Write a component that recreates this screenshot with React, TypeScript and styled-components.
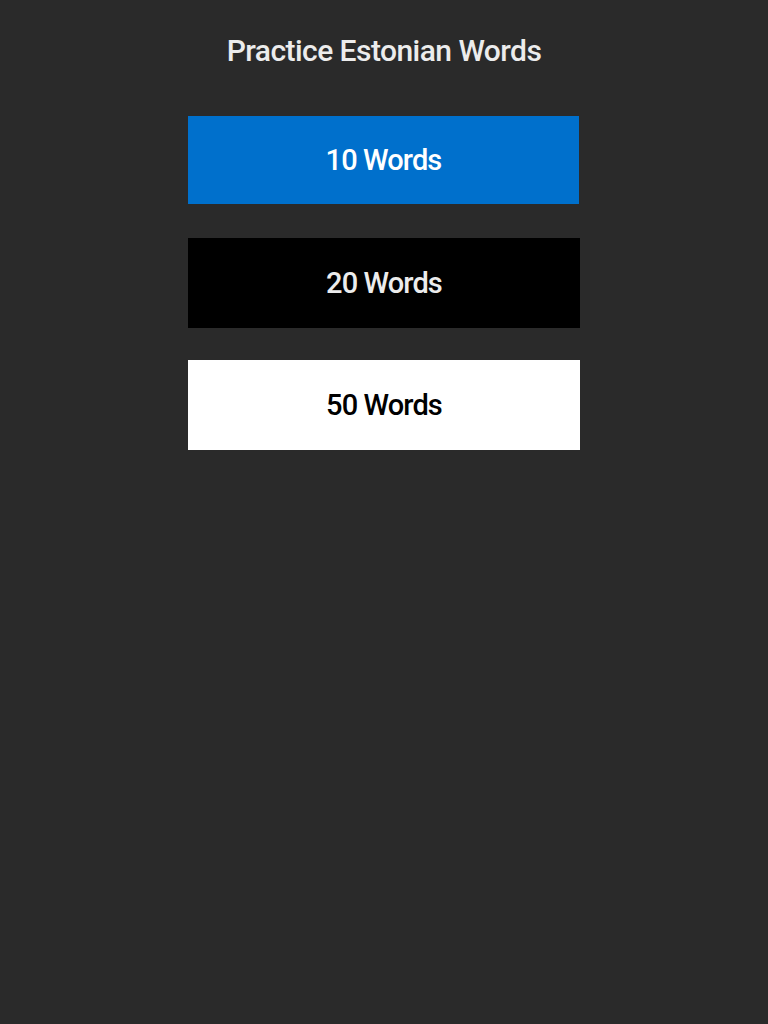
import React from "react";
import styled, { createGlobalStyle } from "styled-components";

const Global = createGlobalStyle`
  html, body { margin: 0; padding: 0; background: #2a2a2a; }
  body { font-family: Roboto, "Liberation Sans", sans-serif; }
`;

const Page = styled.div`
  min-height: 1024px;
  background: #2a2a2a;
  display: flex;
  flex-direction: column;
  align-items: center;
  padding-top: 32px;
  box-sizing: border-box;
`;

const Title = styled.h1`
  margin: 0 0 46px;
  font-family: Roboto, "Liberation Sans", sans-serif;
  font-weight: 500;
  font-size: 30px;
  line-height: 38px;
  color: #ececec;
  letter-spacing: -0.55px;
`;

const List = styled.div`
  width: 392px;
  display: flex;
  flex-direction: column;
  align-items: flex-start;
`;

const variants = {
  blue: { bg: "#0070cc", fg: "#ffffff", w: 391, h: 88, mt: 0 },
  black: { bg: "#000000", fg: "#ececec", w: 392, h: 90, mt: 34 },
  white: { bg: "#ffffff", fg: "#000000", w: 392, h: 90, mt: 32 },
};

const Choice = styled.button<{ $v: keyof typeof variants }>`
  display: flex;
  align-items: center;
  justify-content: center;
  border: none;
  padding: 0;
  margin: ${(p) => variants[p.$v].mt}px 0 0;
  width: ${(p) => variants[p.$v].w}px;
  height: ${(p) => variants[p.$v].h}px;
  background: ${(p) => variants[p.$v].bg};
  color: ${(p) => variants[p.$v].fg};
  font-family: Roboto, "Liberation Sans", sans-serif;
  font-weight: 500;
  font-size: 29px;
  letter-spacing: -0.9px;
  cursor: pointer;
`;

export default function App() {
  return (
    <>
      <Global />
      <Page>
        <Title>Practice Estonian Words</Title>
        <List>
          <Choice $v="blue">10 Words</Choice>
          <Choice $v="black">20 Words</Choice>
          <Choice $v="white">50 Words</Choice>
        </List>
      </Page>
    </>
  );
}
